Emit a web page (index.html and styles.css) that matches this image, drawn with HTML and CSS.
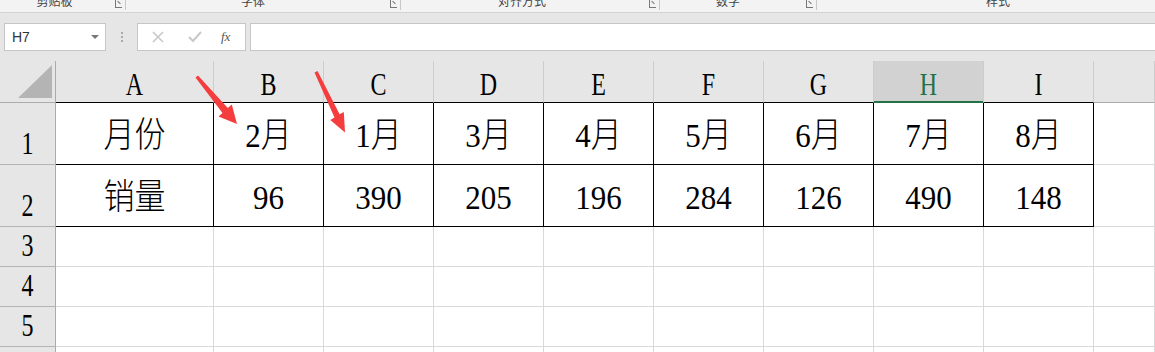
FILE: index.html
```html
<!DOCTYPE html>
<html lang="zh">
<head>
<meta charset="utf-8">
<link rel="stylesheet" href="styles.css">
</head>
<body>
<div class="app">
  <div class="ribbon">
    <div class="grp g1"><span class="lbl">剪贴板</span><span class="launch"></span></div>
    <div class="grp g2"><span class="lbl">字体</span><span class="launch"></span></div>
    <div class="grp g3"><span class="lbl">对齐方式</span><span class="launch"></span></div>
    <div class="grp g4"><span class="lbl">数字</span><span class="launch"></span></div>
    <div class="grp g5"><span class="lbl">样式</span></div>
  </div>
  <div class="fbar">
    <div class="namebox"><span class="nm">H7</span><span class="dd"></span></div>
    <div class="dots"><i></i><i></i><i></i></div>
    <div class="btns">
      <svg class="ic" width="14" height="14" viewBox="0 0 14 14"><path d="M2 2L12 12M12 2L2 12" stroke="#c8c8c8" stroke-width="1.6" fill="none"/></svg>
      <svg class="ic" width="16" height="14" viewBox="0 0 16 14"><path d="M2 7L6 11L14 2" stroke="#c8c8c8" stroke-width="2" fill="none"/></svg>
      <span class="fx">fx</span>
    </div>
    <div class="input"></div>
  </div>
  <div class="sheet">
    <div class="grid">
      <div class="corner"><span class="tri"></span></div>
      <div class="ch tb"><span class="hl">A</span></div>
      <div class="ch tb"><span class="hl">B</span></div>
      <div class="ch tb"><span class="hl">C</span></div>
      <div class="ch tb"><span class="hl">D</span></div>
      <div class="ch tb"><span class="hl">E</span></div>
      <div class="ch tb"><span class="hl">F</span></div>
      <div class="ch tb"><span class="hl">G</span></div>
      <div class="ch tb sel"><span class="hl">H</span></div>
      <div class="ch tb"><span class="hl">I</span></div>
      <div class="ch"></div>

      <div class="rh"><span class="hl">1</span></div>
      <div class="c t"><span class="tx">月份</span></div>
      <div class="c t"><span class="tx">2月</span></div>
      <div class="c t"><span class="tx">1月</span></div>
      <div class="c t"><span class="tx">3月</span></div>
      <div class="c t"><span class="tx">4月</span></div>
      <div class="c t"><span class="tx">5月</span></div>
      <div class="c t"><span class="tx">6月</span></div>
      <div class="c t"><span class="tx">7月</span></div>
      <div class="c t"><span class="tx">8月</span></div>
      <div class="c"></div>

      <div class="rh"><span class="hl">2</span></div>
      <div class="c t"><span class="tx">销量</span></div>
      <div class="c t"><span class="tx">96</span></div>
      <div class="c t"><span class="tx">390</span></div>
      <div class="c t"><span class="tx">205</span></div>
      <div class="c t"><span class="tx">196</span></div>
      <div class="c t"><span class="tx">284</span></div>
      <div class="c t"><span class="tx">126</span></div>
      <div class="c t"><span class="tx">490</span></div>
      <div class="c t"><span class="tx">148</span></div>
      <div class="c"></div>

      <div class="rh"><span class="hl">3</span></div>
      <div class="c"></div><div class="c"></div><div class="c"></div><div class="c"></div><div class="c"></div><div class="c"></div><div class="c"></div><div class="c"></div><div class="c"></div><div class="c"></div>
      <div class="rh"><span class="hl">4</span></div>
      <div class="c"></div><div class="c"></div><div class="c"></div><div class="c"></div><div class="c"></div><div class="c"></div><div class="c"></div><div class="c"></div><div class="c"></div><div class="c"></div>
      <div class="rh"><span class="hl">5</span></div>
      <div class="c"></div><div class="c"></div><div class="c"></div><div class="c"></div><div class="c"></div><div class="c"></div><div class="c"></div><div class="c"></div><div class="c"></div><div class="c"></div>
      <div class="rh"><span class="hl">6</span></div>
      <div class="c"></div><div class="c"></div><div class="c"></div><div class="c"></div><div class="c"></div><div class="c"></div><div class="c"></div><div class="c"></div><div class="c"></div><div class="c"></div>
    </div>
    <svg class="arrows" width="1155" height="291" viewBox="0 61 1155 291">
      <polygon points="195.5,77.5 222.5,113 218.5,116.5 237,124 231.8,104.5 227.8,108 198,75.5" fill="#f53d3d"/>
      <polygon points="314.5,72.5 334.5,117.5 330.3,120 345,132.5 343.8,112 339.6,114.3 317.5,71" fill="#f53d3d"/>
    </svg>
  </div>
</div>
</body>
</html>
```
FILE: styles.css
```css
html, body {
  margin: 0;
  padding: 0;
  background: #e6e6e6;
  overflow: hidden;
}
.app {
  width: 1155px;
  height: 352px;
  overflow: hidden;
  font-family: "Noto Sans CJK SC", "Liberation Sans", sans-serif;
}
.ribbon {
  height: 12px;
  background: #f3f3f3;
  border-bottom: 1px solid #d4d4d4;
  display: flex;
  overflow: hidden;
}
.grp {
  position: relative;
  display: flex;
  justify-content: center;
  border-right: 1px solid #c8c8c8;
  height: 10px;
}
.g1 { width: 125px; }
.g2 { width: 274px; }
.g3 { width: 258px; }
.g4 { width: 156px; }
.g5 { flex: 1; border-right: none; }
.g1 .lbl { margin-left: -16px; }
.g2 .lbl { margin-left: -20px; }
.g3 .lbl { margin-left: -16px; }
.g4 .lbl { margin-left: -20px; }
.g5 .lbl { margin-left: 24px; }
.lbl {
  font-size: 12px;
  line-height: 12px;
  margin-top: -5px;
  color: #444;
}
.launch {
  position: absolute;
  right: 3px;
  top: 0;
  width: 7px;
  height: 8px;
  border-left: 1px solid #777;
  border-bottom: 1px solid #777;
  box-sizing: border-box;
}
.launch::after {
  content: "";
  position: absolute;
  left: 1px;
  top: 2px;
  width: 4px;
  height: 1px;
  background: #777;
  transform: rotate(45deg);
}
.fbar {
  height: 48px;
  display: flex;
  align-items: flex-start;
  padding-top: 10px;
  box-sizing: border-box;
}
.namebox {
  margin-left: 4px;
  width: 102px;
  height: 28px;
  background: #fff;
  border: 1px solid #c6c6c6;
  box-sizing: border-box;
  display: flex;
  align-items: center;
  justify-content: space-between;
  padding: 0 6px 0 7px;
}
.nm {
  font-family: "Liberation Sans", sans-serif;
  font-size: 14px;
  color: #333;
}
.dd {
  width: 0;
  height: 0;
  border-left: 4px solid transparent;
  border-right: 4px solid transparent;
  border-top: 4px solid #777;
}
.dots {
  width: 31px;
  height: 28px;
  display: flex;
  flex-direction: column;
  align-items: center;
  justify-content: center;
  gap: 2px;
}
.dots i {
  width: 2px;
  height: 2px;
  background: #aaa;
}
.btns {
  width: 109px;
  height: 28px;
  background: #fff;
  border: 1px solid #c6c6c6;
  box-sizing: border-box;
  display: flex;
  align-items: center;
  padding-left: 13px;
  gap: 22px;
}
.fx {
  font-family: "Liberation Serif", serif;
  font-style: italic;
  font-size: 13px;
  color: #555;
  margin-left: -4px;
}
.input {
  margin-left: 4px;
  flex: 1;
  height: 28px;
  background: #fff;
  border: 1px solid #c6c6c6;
  border-right: none;
  box-sizing: border-box;
}
.sheet {
  position: relative;
  height: 291px;
  overflow: hidden;
  background: #fff;
}
.grid {
  display: grid;
  grid-template-columns: 56px 158px repeat(8, 110px) 1fr;
  grid-template-rows: 42px 62px 62px 40px 40px 40px 40px;
  font-family: "Liberation Serif", "Noto Sans CJK SC", serif;
  color: #000;
}
.grid > div {
  box-sizing: border-box;
  border-right: 1px solid #d9d9d9;
  border-bottom: 1px solid #d9d9d9;
  display: flex;
  justify-content: center;
  overflow: hidden;
}
.corner {
  background: #e6e6e6;
  position: relative;
}
.grid > .corner {
  border-right: 1px solid #ababab;
  border-bottom: 1px solid #ababab;
}
.tri {
  position: absolute;
  left: 18px;
  top: 4px;
  width: 34px;
  height: 33px;
  background: #b4b4b4;
  clip-path: polygon(100% 0, 100% 100%, 0 100%);
}
.grid > .ch {
  background: #e6e6e6;
  border-right: 1px solid #cdcdcd;
  border-bottom: 1px solid #ababab;
  align-items: center;
  padding-top: 5px;
}
.grid > .ch.tb {
  border-bottom-color: #000;
}
.grid > .ch.sel {
  background: #d2d2d2;
  color: #217346;
  border-bottom-color: #217346;
  box-shadow: inset 0 -1px 0 #217346;
}
.hl {
  display: inline-block;
  font-size: 24px;
  line-height: 24px;
  transform: scaleY(1.35);
}
.grid > .rh {
  background: #e6e6e6;
  border-right: 1px solid #ababab;
  border-bottom: 1px solid #b4b4b4;
  align-items: flex-end;
  padding-bottom: 5px;
}
.rh .hl {
  transform-origin: 50% 100%;
}
.grid > .c {
  align-items: center;
}
.grid > .c.t {
  border-right-color: #000;
  border-bottom-color: #000;
}
.tx {
  display: inline-block;
  font-size: 31px;
  font-weight: 300;
  line-height: 32px;
  transform: scaleY(1.12);
  padding-top: 4px;
}
.arrows {
  position: absolute;
  left: 0;
  top: 0;
  pointer-events: none;
}
```
